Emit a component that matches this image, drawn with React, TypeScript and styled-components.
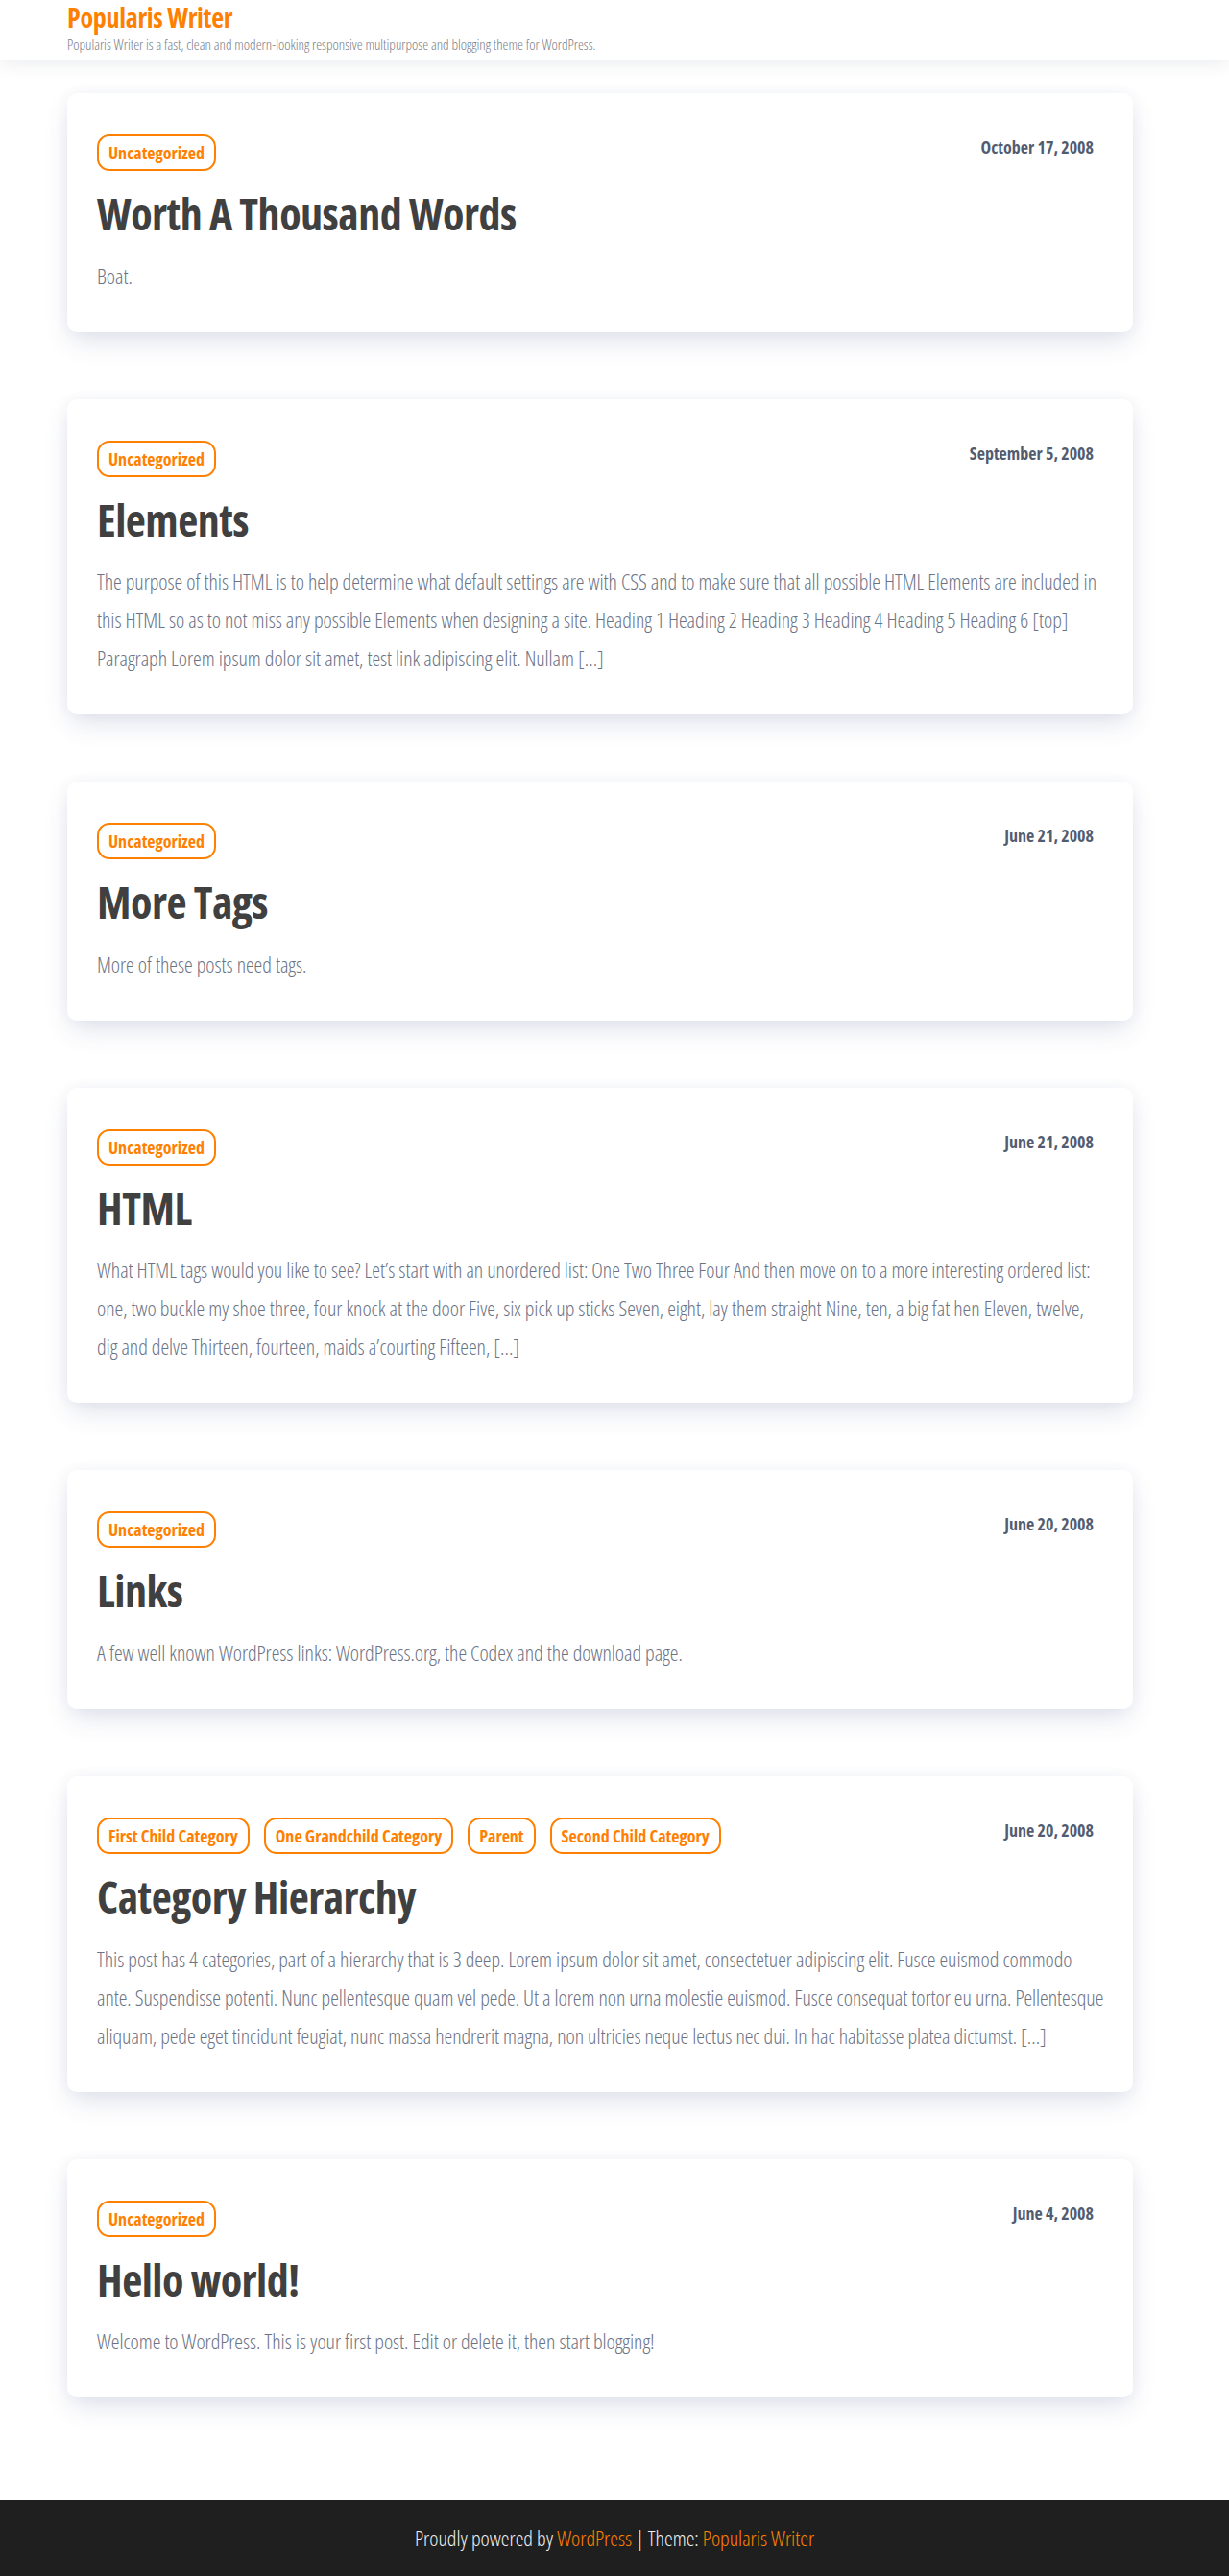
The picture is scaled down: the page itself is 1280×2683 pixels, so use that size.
import React from "react";
import styled, { createGlobalStyle } from "styled-components";

const GlobalStyle = createGlobalStyle`
  html, body { margin: 0; padding: 0; background: #ffffff; }
  body {
    font-family: "Open Sans", "Liberation Sans Narrow", "Liberation Sans", sans-serif;
    font-stretch: 75%;
    -webkit-font-smoothing: antialiased;
  }
  * { box-sizing: border-box; }
`;

const ORANGE = "#ff8000";

const Header = styled.header`
  position: relative;
  z-index: 2;
  height: 62px;
  background: #ffffff;
  box-shadow: 0 4px 18px rgba(30, 40, 80, 0.09);
`;

const HeaderInner = styled.div`
  width: 1140px;
  margin: 0 auto;
  display: flex;
  flex-direction: column;
  align-items: flex-start;
`;

const SiteTitle = styled.a`
  font-size: 28px;
  font-weight: 700;
  line-height: 36px;
  color: ${ORANGE};
  text-decoration: none;
  letter-spacing: -0.3px;
`;

const Tagline = styled.p`
  margin: 1px 0 0;
  font-size: 15px;
  font-weight: 300;
  line-height: 18px;
  color: #777c86;
`;

const Main = styled.main`
  width: 1140px;
  margin: 0 auto;
  padding: 35px 0 107px;
  display: flex;
  flex-direction: column;
  gap: 70px;
`;

const Card = styled.article`
  width: 1110px;
  background: #ffffff;
  border-radius: 10px;
  padding: 43px 29px 39px 31px;
  box-shadow: 0 12px 28px -4px rgba(54, 70, 130, 0.16), 0 0 14px rgba(54, 70, 130, 0.05);
`;

const MetaRow = styled.div`
  display: flex;
  justify-content: space-between;
  align-items: flex-start;
`;

const Tags = styled.div`
  display: flex;
  flex-wrap: wrap;
  gap: 15px;
`;

const Tag = styled.a`
  display: inline-block;
  height: 38px;
  padding: 0 10px;
  border: 2px solid ${ORANGE};
  border-radius: 13px;
  font-size: 18px;
  font-weight: 700;
  line-height: 34px;
  color: ${ORANGE};
  text-decoration: none;
`;

const PostDate = styled.time`
  margin-right: 12px;
  font-size: 18px;
  font-weight: 700;
  line-height: 27px;
  color: #525c70;
`;

const Title = styled.h2`
  margin: 16px 0 0;
  font-size: 46px;
  font-weight: 700;
  line-height: 57.6px;
  letter-spacing: -0.5px;
  color: #404040;
`;

const Excerpt = styled.p`
  margin: 15px 0 0;
  font-size: 22px;
  font-weight: 300;
  line-height: 40px;
  letter-spacing: -0.04px;
  color: #6b7385;
`;

const Footer = styled.footer`
  background: #1f1f1f;
  padding: 25px 0;
  text-align: center;
  font-size: 22px;
  font-weight: 300;
  line-height: 29px;
  color: #f0f0f0;
`;

const FooterLink = styled.a`
  color: ${ORANGE};
  text-decoration: none;
`;

type Post = { cats: string[]; date: string; title: string; excerpt: string };

const posts: Post[] = [
  { cats: ["Uncategorized"], date: "October 17, 2008", title: "Worth A Thousand Words", excerpt: "Boat." },
  {
    cats: ["Uncategorized"],
    date: "September 5, 2008",
    title: "Elements",
    excerpt:
      "The purpose of this HTML is to help determine what default settings are with CSS and to make sure that all possible HTML Elements are included in this HTML so as to not miss any possible Elements when designing a site. Heading 1 Heading 2 Heading 3 Heading 4 Heading 5 Heading 6 [top] Paragraph Lorem ipsum dolor sit amet, test link adipiscing elit. Nullam […]",
  },
  { cats: ["Uncategorized"], date: "June 21, 2008", title: "More Tags", excerpt: "More of these posts need tags." },
  {
    cats: ["Uncategorized"],
    date: "June 21, 2008",
    title: "HTML",
    excerpt:
      "What HTML tags would you like to see? Let’s start with an unordered list: One Two Three Four And then move on to a more interesting ordered list: one, two buckle my shoe three, four knock at the door Five, six pick up sticks Seven, eight, lay them straight Nine, ten, a big fat hen Eleven, twelve, dig and delve Thirteen, fourteen, maids a’courting Fifteen, […]",
  },
  {
    cats: ["Uncategorized"],
    date: "June 20, 2008",
    title: "Links",
    excerpt: "A few well known WordPress links: WordPress.org, the Codex and the download page.",
  },
  {
    cats: ["First Child Category", "One Grandchild Category", "Parent", "Second Child Category"],
    date: "June 20, 2008",
    title: "Category Hierarchy",
    excerpt:
      "This post has 4 categories, part of a hierarchy that is 3 deep. Lorem ipsum dolor sit amet, consectetuer adipiscing elit. Fusce euismod commodo ante. Suspendisse potenti. Nunc pellentesque quam vel pede. Ut a lorem non urna molestie euismod. Fusce consequat tortor eu urna. Pellentesque aliquam, pede eget tincidunt feugiat, nunc massa hendrerit magna, non ultricies neque lectus nec dui. In hac habitasse platea dictumst. […]",
  },
  {
    cats: ["Uncategorized"],
    date: "June 4, 2008",
    title: "Hello world!",
    excerpt: "Welcome to WordPress. This is your first post. Edit or delete it, then start blogging!",
  },
];

export default function App() {
  return (
    <>
      <GlobalStyle />
      <Header>
        <HeaderInner>
          <SiteTitle href="#">Popularis Writer</SiteTitle>
          <Tagline>
            Popularis Writer is a fast, clean and modern-looking responsive multipurpose and blogging theme for WordPress.
          </Tagline>
        </HeaderInner>
      </Header>
      <Main>
        {posts.map((p) => (
          <Card key={p.title}>
            <MetaRow>
              <Tags>
                {p.cats.map((c) => (
                  <Tag key={c} href="#">
                    {c}
                  </Tag>
                ))}
              </Tags>
              <PostDate>{p.date}</PostDate>
            </MetaRow>
            <Title>{p.title}</Title>
            <Excerpt>{p.excerpt}</Excerpt>
          </Card>
        ))}
      </Main>
      <Footer>
        Proudly powered by <FooterLink href="#">WordPress</FooterLink> | Theme:{" "}
        <FooterLink href="#">Popularis Writer</FooterLink>
      </Footer>
    </>
  );
}
